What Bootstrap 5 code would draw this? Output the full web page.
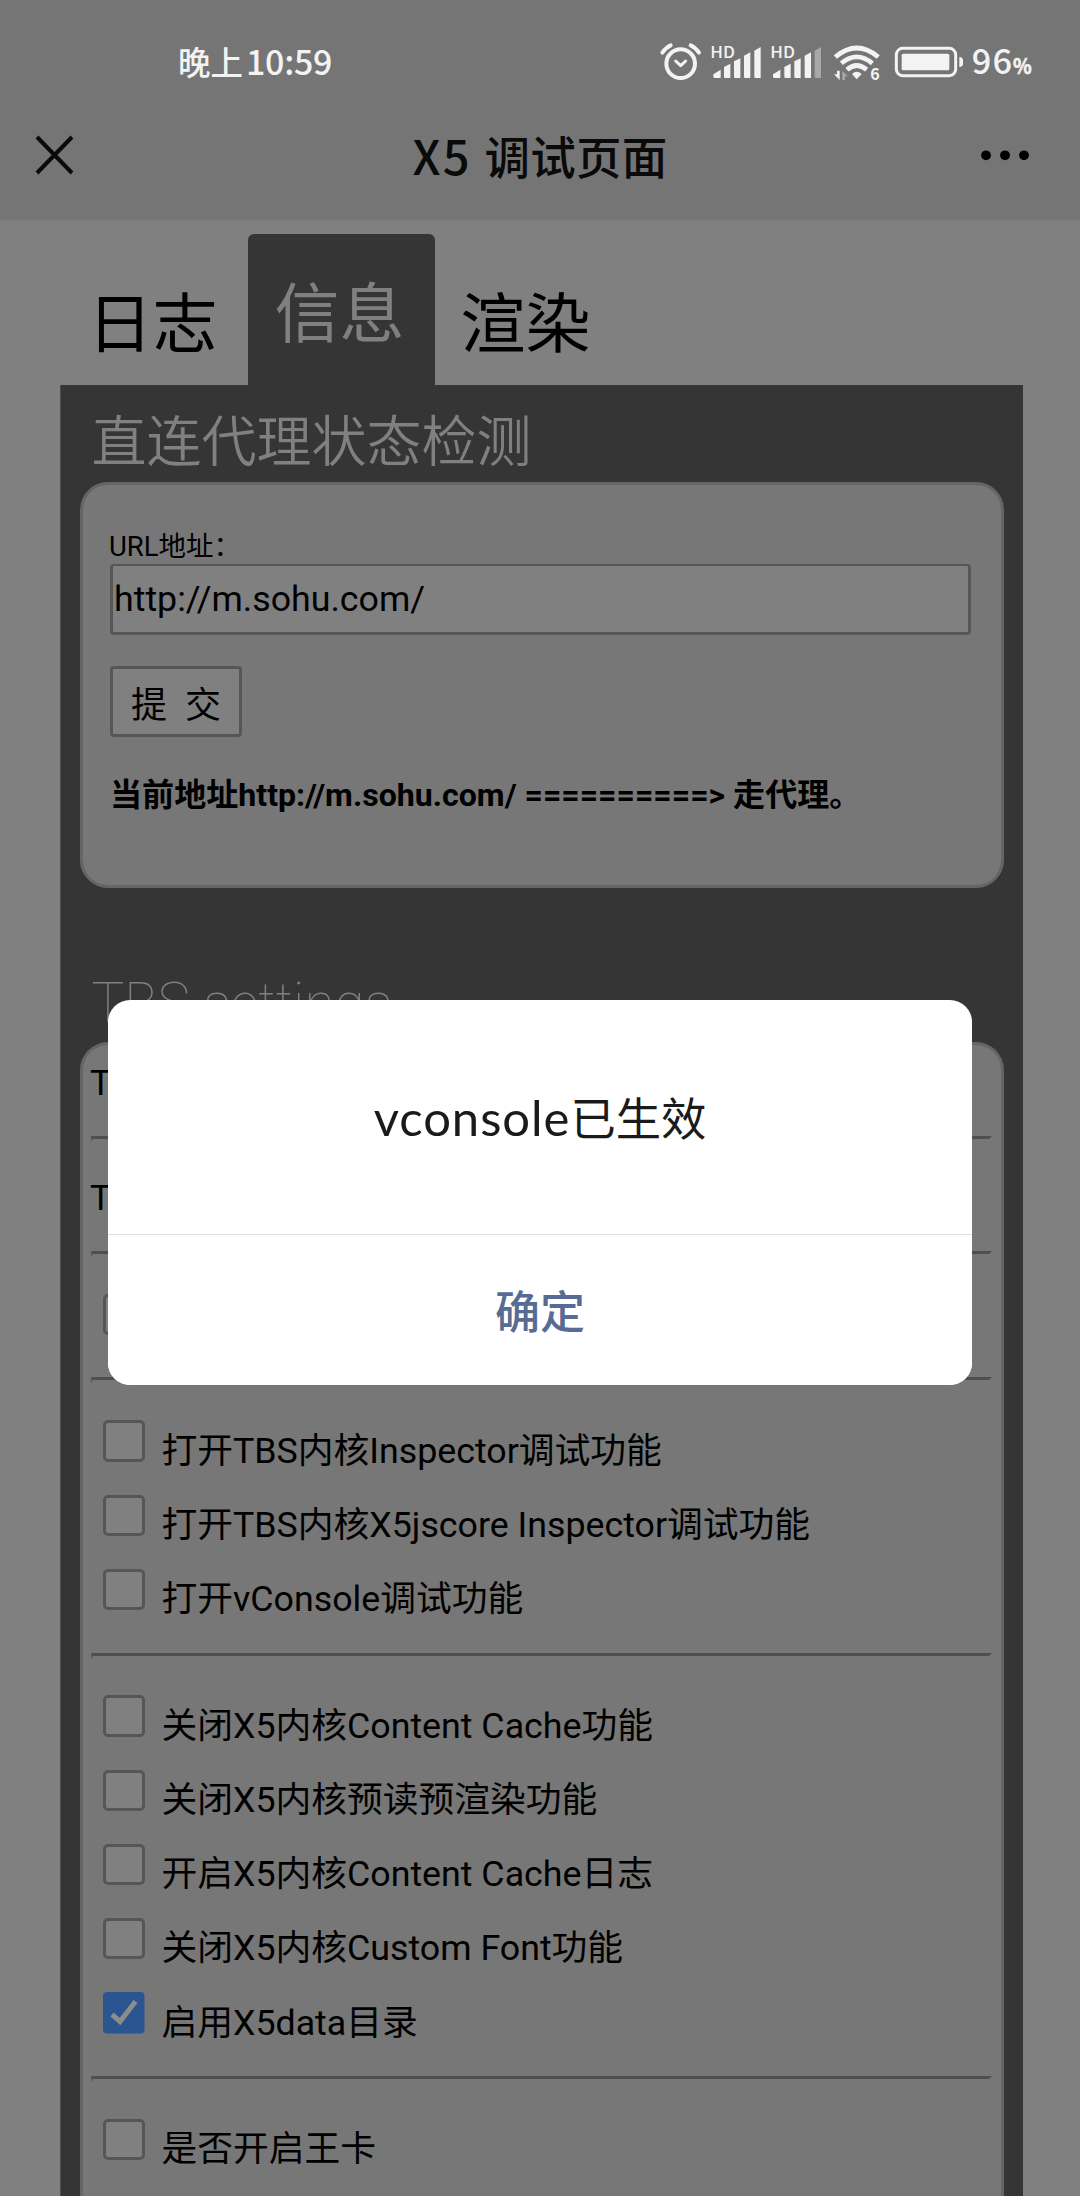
<!DOCTYPE html>
<html lang="zh-CN">
<head>
<meta charset="utf-8">
<meta name="viewport" content="width=device-width, initial-scale=1">
<title>X5 调试页面</title>
<link href="https://cdn.jsdelivr.net/npm/bootstrap@5.3.0/dist/css/bootstrap.min.css" rel="stylesheet">
<style>
html,body{height:2196px;overflow:hidden}
body{background:#808080;color:#000;font-family:Roboto,"Noto Sans CJK SC",sans-serif;line-height:1}
.ui-font{font-family:"Noto Sans CJK SC",sans-serif}
.topbar{height:220px;background:#757575}
.statusbar{height:100px;padding:20px 0 0 178px;color:#f3f3f3}
.clock{font-size:32.5px;font-weight:500;line-height:80px;height:80px;width:462px;white-space:nowrap;padding-top:1px}
.clock .digits{font-size:34px;letter-spacing:-.3px;margin-left:3px}
.titlebar{height:108px;padding:0 49px 0 34px}
.titlebar h1{font-size:45.5px;font-weight:500;color:#0a0a0a;letter-spacing:.2px;line-height:60px;padding:2px 0 0 23px;white-space:nowrap}
.titlebar h1 span{font-size:47px;letter-spacing:2.2px}
.page-wrap{padding:13.5px 57px 0 60px}
.tab-strip{height:151.5px;padding-left:27.5px;gap:26px}
.tab-item{font-size:65px;line-height:80px;color:#000;white-space:nowrap;padding:51px 0 0 0;border:0;border-radius:0;background:none}
.tab-item.active{width:187px;height:151.5px;background:#353535;color:#808080;border-radius:6px 6px 0 0;padding:12px 3px 0 0;text-align:center;margin-left:4px}
.panel{background:#353535;height:1811px;overflow:hidden;padding:0 19.5px 0 19px;border-left:1px solid #4c4c4c}
.panel h2{font-size:55px;line-height:78px;height:96.5px;padding:18px 0 0 11.5px;margin:0;color:#808080;font-weight:350;white-space:nowrap}
.panel .thin-title{font-weight:100;margin-top:57.5px}
.box{background:#777;border:3px solid #656565;border-radius:28px}
.form-box{height:406.5px;padding:43.5px 29.5px 0 27px}
.form-box label{font-size:27.5px;line-height:38px;display:block;height:36px;margin-left:-1px}
.url-field{height:71px;border:3px solid #565656;border-top-width:2px;border-radius:4px;background:#808080!important;color:#000!important;font-size:35.75px;padding:0 1px;line-height:1;box-shadow:none!important}
.submit-btn{display:block;margin-top:31px;width:132px;height:70.5px;border:3px solid #565656;border-radius:4px;background:#808080;color:#000;font-size:36px;line-height:1;padding:9px 0 0;white-space:pre}
.result{font-size:32.1px;font-weight:700;line-height:44px;margin:36px 0 0 0;white-space:nowrap}
.settings-box{height:1160px;border-bottom:0;border-bottom-left-radius:0;border-bottom-right-radius:0;padding:0 9px 0 8px}
.plain-row{font-size:35.75px;height:64px;padding-top:10px;line-height:56px;margin-left:-1px}
.plain-row.second{height:62.8px;padding-top:8px}
.rule{height:6px;border-style:solid;border-width:3px 3px 3px 2px;border-color:#4f4f4f transparent transparent #5a5a5a;margin:26.5px 0 20px}
.opt{height:74.2px;padding-left:12px;font-size:35.75px}
.opt .form-check-input{width:41.5px;height:41.5px;margin:1px 0 0;border:3px solid #565656;border-radius:5px;background-color:#808080;flex:none;float:none;background-image:none;opacity:1}
.opt .tick{width:41.5px;height:41.5px;flex:none;margin-top:1px}
.opt label{padding:20.5px 0 0 17px;line-height:44px;white-space:nowrap}
.dialog{position:absolute;left:108px;top:1000px;width:864px;height:385px;border-radius:22px;background:#fff;overflow:hidden;z-index:5}
.dialog .msg{height:234px;font-family:Lato,"Noto Sans CJK SC",sans-serif;font-size:45.3px;color:#1a1a1a}
.dialog .msg .latin{font-size:49px;letter-spacing:.95px}
.dialog .ok{height:151px;width:100%;border:0;border-top:1px solid #dedede;background:#fff;color:#576b95;font-size:45px;font-weight:500;padding:0 0 2px}
</style>
</head>
<body>
<header class="topbar ui-font">
  <div class="statusbar d-flex">
    <div class="clock">晚上<span class="digits">10:59</span></div>
    <svg width="440" height="80" viewBox="0 0 1320 240" fill="#f3f3f3">
      <g fill="none" stroke="#f3f3f3" stroke-linecap="round" stroke-linejoin="round">
        <circle cx="122" cy="131" r="43" stroke-width="12"/>
        <path d="M67 98Q78 82 92 76M152 76Q166 82 177 98" stroke-width="12"/>
        <path d="M107 123L122 137L137 123" stroke-width="9"/>
      </g>
      <text x="211" y="113" font-size="47" font-weight="500" textLength="74" lengthAdjust="spacingAndGlyphs">HD</text>
      <path d="M220 163L242 149V174H224Q220 174 220 170ZM252 141L271 131V174H256Q252 174 252 170ZM282 124L301 115V174H286Q282 174 282 170ZM312 107L331 97V174H316Q312 174 312 170ZM343 92L362 81V174H347Q343 174 343 170Z"/>
      <text x="391" y="113" font-size="47" font-weight="500" textLength="74" lengthAdjust="spacingAndGlyphs">HD</text>
      <path d="M399 163L421 149V174H403Q399 174 399 170ZM433 141L452 131V174H437Q433 174 433 170ZM463 124L482 115V174H467Q463 174 463 170ZM494 107L513 97V174H498Q494 174 494 170Z"/>
      <path d="M524 92L543 81V174H528Q524 174 524 170Z" fill="#a8a8a8"/>
      <g fill="none" stroke="#f3f3f3" stroke-width="14">
        <path d="M586 111Q650 57 715 111"/>
        <path d="M604 130Q650 91 697 130"/>
        <path d="M621 149Q650 124 680 149"/>
      </g>
      <path d="M636 162Q650 149 665 162L650 178Z"/>
      <path d="M599 152V180L582 163H591V152Z"/>
      <path d="M607 180V153L624 169H615V180Z" fill="#a8a8a8"/>
      <text x="691" y="180" font-size="48" font-weight="700">6</text>
      <rect x="769" y="85" width="178" height="82" rx="19" fill="none" stroke="#f3f3f3" stroke-width="9"/>
      <rect x="785" y="101" width="143" height="50" rx="5"/>
      <path d="M958 111Q969 112 969 120V132Q969 140 958 141Z"/>
      <text x="995" y="162" font-size="103" font-weight="500" textLength="121">96</text>
      <text x="1119" y="162" font-size="63" font-weight="700" stroke="#f3f3f3" stroke-width="2" textLength="56" lengthAdjust="spacingAndGlyphs">%</text>
    </svg>
  </div>
  <div class="titlebar d-flex align-items-center justify-content-between">
    <svg width="42" height="42" viewBox="0 0 42 42" fill="none" stroke="#0a0a0a" stroke-width="4"><path d="M3 4L38 40M38 4L3 40"/></svg>
    <h1 class="m-0"><span>X5 </span>调试页面</h1>
    <svg width="50" height="14" viewBox="0 0 50 14"><circle cx="5" cy="8.3" r="4.9"/><circle cx="24" cy="8.3" r="4.9"/><circle cx="43" cy="8.3" r="4.9"/></svg>
  </div>
</header>
<main class="page-wrap">
  <nav class="tab-strip d-flex align-items-start">
    <button class="tab-item">日志</button>
    <button class="tab-item active">信息</button>
    <button class="tab-item">渲染</button>
  </nav>
  <section class="panel">
    <h2>直连代理状态检测</h2>
    <div class="box form-box">
      <label for="url">URL地址：</label>
      <input id="url" class="form-control url-field" type="text" value="http://m.sohu.com/">
      <button class="submit-btn">提  交</button>
      <p class="result">当前地址http://m.sohu.com/ ==========&gt; 走代理。</p>
    </div>
    <h2 class="thin-title">TBS settings</h2>
    <div class="box settings-box">
      <div class="plain-row">T</div>
      <div class="rule"></div>
      <div class="plain-row second">T</div>
      <div class="rule"></div>
      <div class="opt d-flex align-items-center"><input class="form-check-input" type="checkbox"></div>
      <div class="rule"></div>
      <div class="opt d-flex align-items-center"><input class="form-check-input" type="checkbox"><label>打开TBS内核Inspector调试功能</label></div>
      <div class="opt d-flex align-items-center"><input class="form-check-input" type="checkbox"><label>打开TBS内核X5jscore Inspector调试功能</label></div>
      <div class="opt d-flex align-items-center"><input class="form-check-input" type="checkbox"><label>打开vConsole调试功能</label></div>
      <div class="rule"></div>
      <div class="opt d-flex align-items-center"><input class="form-check-input" type="checkbox"><label>关闭X5内核Content Cache功能</label></div>
      <div class="opt d-flex align-items-center"><input class="form-check-input" type="checkbox"><label>关闭X5内核预读预渲染功能</label></div>
      <div class="opt d-flex align-items-center"><input class="form-check-input" type="checkbox"><label>开启X5内核Content Cache日志</label></div>
      <div class="opt d-flex align-items-center"><input class="form-check-input" type="checkbox"><label>关闭X5内核Custom Font功能</label></div>
      <div class="opt d-flex align-items-center"><svg class="tick" viewBox="0 0 41.5 41.5"><rect width="41.5" height="41.5" rx="4" fill="#2b5590"/><path d="M9 22.5L17 29.5L32.5 9.5" fill="none" stroke="#8c8c8c" stroke-width="5"/></svg><label>启用X5data目录</label></div>
      <div class="rule"></div>
      <div class="opt d-flex align-items-center"><input class="form-check-input" type="checkbox"><label>是否开启王卡</label></div>
    </div>
  </section>
</main>
<div class="dialog ui-font" role="dialog">
  <div class="msg d-flex align-items-center justify-content-center"><div><span class="latin">vconsole</span>已生效</div></div>
  <button class="ok">确定</button>
</div>
<script src="https://cdn.jsdelivr.net/npm/bootstrap@5.3.0/dist/js/bootstrap.bundle.min.js"></script>
</body>
</html>
